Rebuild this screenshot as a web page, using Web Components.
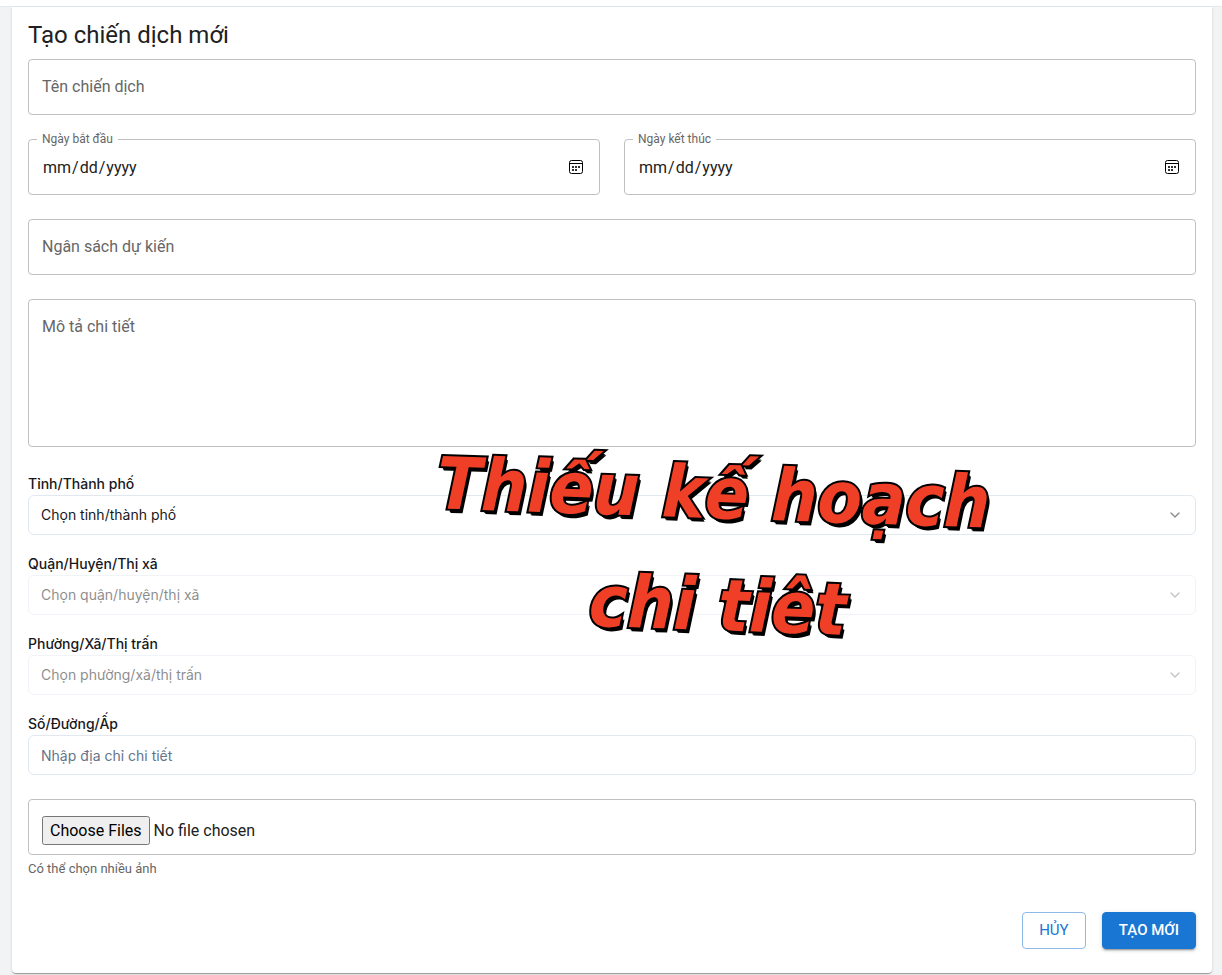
<!DOCTYPE html>
<html lang="vi">
<head>
<meta charset="utf-8">
<title>Tạo chiến dịch mới</title>
<style>
  body { margin: 0; background: #f1f3f5; font-family: Roboto, "Liberation Sans", sans-serif; color: #212121; }
</style>
</head>
<body>
<campaign-page></campaign-page>

<template id="t-page">
  <style>
    :host { display: block; }
    header { height: 6px; background: #fff; border-bottom: 1px solid #e2e8f0; }
    main { display: block; position: relative; margin: 0 10px 2px 12px; padding: 12px 16px 24px; background: #fff;
      border-radius: 0 0 4px 4px;
      box-shadow: 0 2px 1px -1px rgba(0,0,0,.2), 0 1px 1px rgba(0,0,0,.14), 0 1px 3px rgba(0,0,0,.12); }
    h1 { margin: 0 0 8px; font-size: 24px; line-height: 32px; font-weight: 400; }
    form { display: flex; flex-direction: column; gap: 24px; }
    .row { display: grid; grid-template-columns: 1fr 1fr; gap: 24px; }
    .actions { display: flex; justify-content: flex-end; gap: 16px; margin-top: 8px; }
  </style>
  <header></header>
  <main>
    <h1>Tạo chiến dịch mới</h1>
    <form>
      <outlined-field label="Tên chiến dịch"></outlined-field>
      <div class="row">
        <date-field label="Ngày bắt đầu"></date-field>
        <date-field label="Ngày kết thúc"></date-field>
      </div>
      <outlined-field label="Ngân sách dự kiến"></outlined-field>
      <outlined-field label="Mô tả chi tiết" multiline></outlined-field>
      <select-field label="Tỉnh/Thành phố" option="Chọn tỉnh/thành phố"></select-field>
      <select-field label="Quận/Huyện/Thị xã" option="Chọn quận/huyện/thị xã" disabled></select-field>
      <select-field label="Phường/Xã/Thị trấn" option="Chọn phường/xã/thị trấn" disabled></select-field>
      <address-field label="Số/Đường/Ấp" placeholder="Nhập địa chỉ chi tiết"></address-field>
      <file-field>Có thể chọn nhiều ảnh</file-field>
      <div class="actions">
        <action-button>HỦY</action-button>
        <action-button primary>TẠO MỚI</action-button>
      </div>
    </form>
    <page-note>
      <span>Thiếu kế hoạch</span>
      <span>chi tiêt</span>
    </page-note>
  </main>
</template>

<template id="t-outlined">
  <style>
    :host { display: grid; }
    label, input, textarea { grid-area: 1 / 1; box-sizing: border-box; font: 400 16px/24px Roboto, sans-serif; }
    label { padding: 16px 14px; color: #666; pointer-events: none; z-index: 1; }
    input, textarea { width: 100%; margin: 0; padding: 15px 13px; color: #212121; background: transparent;
      border: 1px solid #c0c0c0; border-radius: 4px; outline: none; resize: none; }
    input { height: 56px; }
    textarea { height: 148px; }
  </style>
  <label for="f"></label>
</template>

<template id="t-date">
  <style>
    :host { display: block; }
    fieldset { box-sizing: border-box; height: 65px; margin: -9px 0 0; padding: 0 13px; min-width: 0;
      border: 1px solid #c0c0c0; border-radius: 4px; }
    legend { margin-left: -5px; padding: 0 5px; font-size: 12px; line-height: 19px; color: #666; }
    input { display: block; box-sizing: border-box; width: 100%; height: 37px; margin: 0; padding: 0; border: 0;
      outline: none; background: transparent; color: #212121; font: 400 16px/24px Roboto, sans-serif; }
    input::-webkit-calendar-picker-indicator { width: 16px; height: 16px; padding: 2px; background-size: 16px 16px;
      background-repeat: no-repeat; background-position: center top -1px;
      background-image: url("data:image/svg+xml,%3Csvg xmlns='http://www.w3.org/2000/svg' viewBox='0 0 16 16'%3E%3Crect x='1.5' y='1.5' width='13' height='13' rx='2' fill='none' stroke='%23000'/%3E%3Cpath d='M1.5 4.5h13' stroke='%23000'/%3E%3Cpath d='M4 7h2v2H4zM7 7h2v2H7zM10 7h2v2h-2zM4 10h2v2H4zM7 10h2v2H7z' fill='%23333'/%3E%3C/svg%3E"); }
  </style>
  <fieldset>
    <legend><label for="f"></label></legend>
    <input id="f" type="date" lang="en-US">
  </fieldset>
</template>

<template id="t-select">
  <style>
    :host { display: block; font-family: Inter, sans-serif; margin-top: 3px; }
    label { display: block; margin-bottom: 2px; font-size: 14px; line-height: 19px; font-weight: 500; color: #18181b; }
    .box { display: grid; align-items: center; }
    select, svg { grid-area: 1 / 1; }
    select { appearance: none; box-sizing: border-box; width: 100%; height: 40px; margin: 0; padding: 0 12px;
      border: 1px solid #e2e8f0; border-radius: 6px; background: #fff; color: #18181b; opacity: 1;
      font: 400 14px/20px Inter, sans-serif; outline: none; }
    svg { justify-self: end; margin-right: 13px; opacity: .5; pointer-events: none; z-index: 1; }
    :host([disabled]) { margin-top: -5px; }
    :host([disabled]) .box { opacity: .5; }
  </style>
  <label for="f"></label>
  <div class="box">
    <select id="f"><option></option></select>
    <svg width="16" height="16" viewBox="0 0 24 24" fill="none" stroke="#18181b" stroke-width="2" stroke-linecap="round" stroke-linejoin="round" aria-hidden="true"><path d="m6 9 6 6 6-6"/></svg>
  </div>
</template>

<template id="t-address">
  <style>
    :host { display: block; margin-top: -5px; font-family: Inter, sans-serif; }
    label { display: block; margin-bottom: 2px; font-size: 14px; line-height: 19px; font-weight: 500; color: #18181b; }
    input { display: block; box-sizing: border-box; width: 100%; height: 40px; margin: 0; padding: 0 12px;
      border: 1px solid #e2e8f0; border-radius: 6px; background: #fff; color: #18181b; outline: none;
      font: 400 14px/20px Inter, sans-serif; }
    input::placeholder { color: #64748b; }
  </style>
  <label for="f"></label>
  <input id="f" type="text">
</template>

<template id="t-file">
  <style>
    :host { display: block; }
    input { display: block; box-sizing: border-box; width: 100%; height: 56px; margin: 0; padding: 16px 13px 0;
      border: 1px solid #c0c0c0; border-radius: 4px; font: 400 16px/24px Roboto, sans-serif; color: #212121; }
    input::file-selector-button { box-sizing: border-box; height: 29px; font: 400 16px/21px Roboto, sans-serif; }
    label { display: block; margin: 4px 0 2px; font-size: 13px; line-height: 19px; color: #666; }
  </style>
  <input id="f" type="file" multiple>
  <label for="f"><slot></slot></label>
</template>

<template id="t-button">
  <style>
    :host { display: block; }
    button { display: block; box-sizing: border-box; height: 37px; min-width: 64px; margin: 0; padding: 0 16px 2px;
      border: 1px solid #8cbae8; border-radius: 4px; background: #fff; color: #1976d2;
      font: 400 15px/24px Roboto, sans-serif; }
    :host([primary]) button { border-color: #1976d2; background: #1976d2; color: #fff; font-weight: 500;
      box-shadow: 0 3px 1px -2px rgba(0,0,0,.2), 0 2px 2px rgba(0,0,0,.14), 0 1px 5px rgba(0,0,0,.12); }
  </style>
  <button type="button"><slot></slot></button>
</template>

<template id="t-note">
  <style>
    :host { position: absolute; top: 430px; left: 423px; display: flex; flex-direction: column; align-items: center;
      font: italic 700 72px/112px "DejaVu Sans Condensed", "DejaVu Sans", sans-serif;
      color: #ef4027; white-space: nowrap;
      -webkit-text-stroke: 4px #000; paint-order: stroke fill;
      text-shadow: 1px 1px 0 #000, 2px 3px 0 #000, 3px 4px 0 #000;
      transform: rotate(2deg); pointer-events: none; z-index: 2; }
    ::slotted(:last-child) { padding-left: 16px; }
  </style>
  <slot></slot>
</template>

<script>
  class Base extends HTMLElement {
    constructor() {
      super();
      this.attachShadow({ mode: "open" })
        .append(document.getElementById(this.constructor.template).content.cloneNode(true));
    }
    $(selector) { return this.shadowRoot.querySelector(selector); }
    connectedCallback() {
      if (this.hasAttribute("label")) this.$("label").textContent = this.getAttribute("label");
    }
  }
  class OutlinedField extends Base {
    static template = "t-outlined";
    connectedCallback() {
      super.connectedCallback();
      const control = document.createElement(this.hasAttribute("multiline") ? "textarea" : "input");
      control.id = "f";
      const label = this.$("label");
      control.addEventListener("input", () => { label.style.opacity = control.value ? 0 : 1; });
      this.shadowRoot.append(control);
    }
  }
  class DateField extends Base { static template = "t-date"; }
  class SelectField extends Base {
    static template = "t-select";
    connectedCallback() {
      super.connectedCallback();
      this.$("option").textContent = this.getAttribute("option");
      this.$("select").disabled = this.hasAttribute("disabled");
    }
  }
  class AddressField extends Base {
    static template = "t-address";
    connectedCallback() {
      super.connectedCallback();
      this.$("input").placeholder = this.getAttribute("placeholder");
    }
  }
  class FileField extends Base { static template = "t-file"; }
  class ActionButton extends Base { static template = "t-button"; }
  class PageNote extends Base { static template = "t-note"; }
  class CampaignPage extends Base { static template = "t-page"; }

  customElements.define("outlined-field", OutlinedField);
  customElements.define("date-field", DateField);
  customElements.define("select-field", SelectField);
  customElements.define("address-field", AddressField);
  customElements.define("file-field", FileField);
  customElements.define("action-button", ActionButton);
  customElements.define("page-note", PageNote);
  customElements.define("campaign-page", CampaignPage);
</script>
</body>
</html>
